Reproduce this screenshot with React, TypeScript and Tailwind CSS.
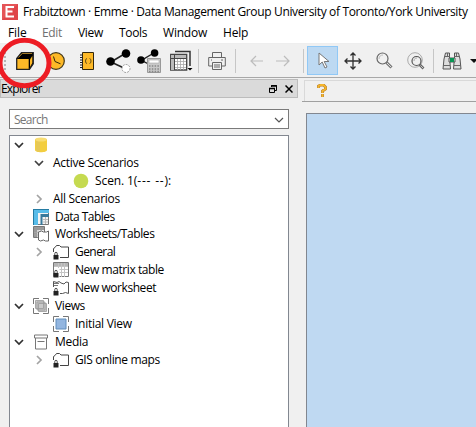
import type { ReactNode } from "react";

function Icon({ w, h, className = "", children }: { w: number; h: number; className?: string; children: ReactNode }) {
  return (
    <svg width={w} height={h} viewBox={`0 0 ${w} ${h}`} className={`shrink-0 ${className}`} fill="none">
      {children}
    </svg>
  );
}

function Separator({ className }: { className: string }) {
  return <div className={`h-6 w-px shrink-0 bg-[#c6c6c6] ${className}`} />;
}

function Chevron({ open, dark = false }: { open?: boolean; dark?: boolean }) {
  return (
    <Icon w={10} h={10}>
      {open ? (
        <path d="M1 3l4 4 4-4" stroke={dark ? "#303030" : "#404040"} strokeWidth="1.7" />
      ) : (
        <path d="M3 1l4 4-4 4" stroke="#a3a3a3" strokeWidth="1.7" />
      )}
    </Icon>
  );
}

function Lock() {
  return (
    <>
      <path d="M1.800 11V9.500a1.200 1.200 0 0 1 2.400 0V11" stroke="#333" strokeWidth=".9" />
      <path d="M.5 11h5v4.500h-5z" fill="#222" />
    </>
  );
}

function LockedFolder() {
  return (
    <Icon w={16} h={16}>
      <path d="M.5 8V4.500l1.500-1 1.500-2h3l1.500 1.500h7.500v10.500H7" stroke="#444" />
      <Lock />
    </Icon>
  );
}

function Corners() {
  return <path d="M.5 6V.5H6M10 .5h5.500V6M15.500 10v5.500H10M6 15.500H.5V10" stroke="#777" />;
}

function Nodes() {
  return (
    <>
      <path d="M5 13L20 4" stroke="#222" strokeWidth="1.500" />
      <circle cx="4.500" cy="12.500" r="4.300" fill="#000" />
      <circle cx="20" cy="4.500" r="4.300" fill="#000" />
    </>
  );
}

function Row({ indent, children }: { indent: string; children: ReactNode }) {
  return <div className={`flex h-[17.92px] items-center whitespace-pre ${indent}`}>{children}</div>;
}

function Label({ gap = "ml-[6px]", className, children }: { gap?: string; className: string; children: ReactNode }) {
  return <span className={`${gap} ${className}`}>{children}</span>;
}

function TitleBar() {
  return (
    <div className="flex h-[22px] items-center pt-[1px]">
      <Icon w={16} h={16} className="ml-[2px]">
        <path d="M0 0h16v16H0z" fill="#df4549" />
        <path d="M0 0h16L0 16z" fill="#f27172" opacity=".35" />
        <path d="M12 3H4.500v9.500H12M4.500 7.500h6" stroke="#fff" strokeWidth="2" />
      </Icon>
      <span className="ml-[5px] whitespace-pre text-[12px] tracking-[-0.35px]">Frabitztown · Emme · Data Management Group University of Toronto/York University</span>
    </div>
  );
}

function MenuBar() {
  return (
    <div className="flex h-[22px] items-center border-b border-[#eee] text-[12px]">
      <span className="ml-2 w-[34px] tracking-[-0.1px]">File</span>
      <span className="w-9 tracking-[-0.35px] text-[#707070]">Edit</span>
      <span className="w-[41px] tracking-[-0.3px]">View</span>
      <span className="w-11 tracking-[-0.35px]">Tools</span>
      <span className="w-[60px] tracking-[-0.2px]">Window</span>
      <span className="tracking-[-0.2px]">Help</span>
    </div>
  );
}

function Toolbar() {
  return (
    <div className="flex h-[34px] items-center overflow-hidden border-b border-[#a8a8a8] bg-[#f0f0f0]">
      <Icon w={2} h={18} className="ml-1"><path d="M1 0v18" stroke="#b5b5b5" strokeWidth="2" strokeDasharray="2 2" /></Icon>
      <Icon w={18} h={18} className="ml-[10px]">
        <path d="M.7 6.500L5.500.7h11.800v11L13.500 17.300H.7z" fill="#000" stroke="#222" strokeWidth="1.200" />
        <path d="M1.300 7h11.400v9.800H1.300z" fill="#fdb927" />
        <path d="M2.500 5.500l3.800-4H16" stroke="#c8952f" strokeWidth=".8" />
        <path d="M14 7.500l2.300-3.500v7L14 15z" fill="#fdb927" />
      </Icon>
      <Icon w={18} h={18} className="ml-[13px]">
        <circle cx="9" cy="9" r="8.300" fill="#fdb927" stroke="#443817" strokeWidth="1.200" />
        <path d="M6.500 4.500l1.500 5 5.500 2.300" stroke="#34280b" strokeWidth="1" />
      </Icon>
      <Icon w={14} h={18} className="ml-[15px]">
        <path d="M2.500.5h11v17h-11z" fill="#fdb927" stroke="#34280b" />
        <path d="M0 3h3M0 5.500h3M0 8h3M0 10.500h3M0 13h3M0 15.500h3" stroke="#222" />
        <path d="M7 6.500q-1.500 0-1.500 2.500t1.500 2.500M9.500 6.500q1.500 0 1.500 2.500t-1.500 2.500" stroke="#675018" />
      </Icon>
      <Icon w={25} h={24} className="ml-3">
        <path d="M5 13l15 7" stroke="#222" strokeWidth="1.500" />
        <Nodes />
        <circle cx="20" cy="19.500" r="4" fill="#fff" stroke="#777" strokeDasharray="2 1" strokeWidth=".7" />
      </Icon>
      <Icon w={25} h={24} className="ml-[6px]">
        <g transform="scale(.88)"><path d="M5 13l12 6" stroke="#222" strokeWidth="1.500" /><Nodes /></g>
        <path d="M10.500 9.500h13v14h-13z" fill="#c9c9c9" stroke="#999" />
        <path d="M12 11h10v3H12z" fill="#fff" stroke="#aaa" strokeWidth=".6" />
        <path d="M12 17h10M12 20h10M12 22.500h10" stroke="#888" strokeWidth="1.400" strokeDasharray="1.500 1.300" />
      </Icon>
      <Icon w={23} h={22} className="ml-[7px] translate-x-px">
        <path d="M5 1.500h15V16" stroke="#333" strokeWidth="1.500" />
        <path d="M.7 4.500h16v15.500H.7z" fill="#fff" stroke="#444" strokeWidth="1.300" />
        <path d="M1 5h15v3H1zM1 8h3v12H1z" fill="#bbb" />
        <path d="M1 8.500h15M4.500 5v15" stroke="#444" />
        <path d="M7.500 9v11M10.500 9v11M13.500 9v11M5 11.500h11M5 14.500h11M5 17.500h11" stroke="#aaa" strokeWidth=".8" />
        <path d="M17.500 18h5l-2.500 2.500z" fill="#000" />
      </Icon>
      <Separator className="ml-[6px]" />
      <Icon w={18} h={18} className="ml-[9px]">
        <path d="M4.500 5V.5h9V5M4.500 14H.7V5.500h16.600V14h-3.800M4.500 10.500h9v7h-9zM6 13h6M6 15h6M3 8h1M13 8h2" stroke="#666" />
      </Icon>
      <Separator className="ml-[9px]" />
      <Icon w={14} h={12} className="ml-[14px]"><path d="M13 6H1M6 1L1 6l5 5" stroke="#bcbcbc" strokeWidth="1.200" /></Icon>
      <Icon w={14} h={12} className="ml-3"><path d="M0 6h13M8 1l5 5-5 5" stroke="#bcbcbc" strokeWidth="1.200" /></Icon>
      <Separator className="ml-[13px]" />
      <div className="ml-[3px] flex h-[29px] w-[31px] shrink-0 items-center justify-center border border-[#90c8f6] bg-[#bdd9f2]">
        <Icon w={12} h={17} className="translate-x-px"><path d="M1 1v12l3.200-3 2.800 6 2-1-2.800-5.500H11z" fill="#fff" stroke="#777" /></Icon>
      </div>
      <Icon w={18} h={18} className="ml-[6px]"><path d="M9 1v16M1 9h16M6.500 3.500L9 1l2.500 2.500M6.500 14.500L9 17l2.500-2.500M3.500 6.500L1 9l2.500 2.500M14.500 6.500L17 9l-2.500 2.500" stroke="#303030" strokeWidth="1.300" /></Icon>
      <Icon w={17} h={17} className="ml-[14px]">
        <circle cx="6.500" cy="6.500" r="5.500" stroke="#666" strokeWidth="1.200" /><path d="M3 7c0-3 2-4 4-4" stroke="#bbb" />
        <path d="M10.500 10.500l5 5" stroke="#777" strokeWidth="3" /><path d="M11 11l4 4" stroke="#ddd" />
      </Icon>
      <Icon w={18} h={18} className="ml-[14px]">
        <circle cx="8" cy="8" r="7.300" stroke="#aaa" /><circle cx="9.500" cy="9" r="4.500" stroke="#555" strokeWidth="1.200" /><path d="M7 9c0-2 1-3 3-3" stroke="#aaa" />
        <path d="M12.500 12.500l4 4" stroke="#666" strokeWidth="2.600" /><path d="M13.500 13.500l2.500 2.500" stroke="#ddd" strokeWidth=".8" />
      </Icon>
      <Separator className="ml-[8px]" />
      <Icon w={20} h={18} className="ml-2">
        <path d="M2.500 5l1-4h4v4l1 12H1L2 7zM17.500 5l-1-4h-4v4l-1 12H19L18 7z" fill="#ddd" stroke="#555" />
        <path d="M1 13.500h7M12 13.500h7M3 4.500h5M12 4.500h5M5.500 1v3M14.500 1v3" stroke="#666" />
        <path d="M7 6h6v4H7z" fill="#e7e7e7" stroke="#555" /><path d="M8 6h4v4H8z" fill="#079653" />
      </Icon>
      <Icon w={6} h={4} className="ml-2"><path d="M0 0h8L4 4z" fill="#111" /></Icon>
    </div>
  );
}

function Explorer() {
  return (
    <aside className="flex w-[298px] shrink-0 flex-col pt-px">
      <header className="flex h-[19px] shrink-0 items-center border border-[#bcbcbc] bg-[#dadada] text-[12px]">
        <span className="grow tracking-[-0.8px]">Explorer</span>
        <Icon w={8} h={8} className="mr-2"><path d="M2.500 2V.5h5v5H6M.5 3.500h5v4h-5z" stroke="#000" /><path d="M2 1h6M0 3.500h6" stroke="#000" strokeWidth="1.500" /></Icon>
        <Icon w={8} h={8} className="mr-[4px]"><path d="M.5.5l7 7m0-7l-7 7" stroke="#000" strokeWidth="1.500" /></Icon>
      </header>
      <div className="ml-[9px] mt-[11px] flex h-5 w-[280px] shrink-0 items-center border border-[#7a7a7a] bg-white px-1 pt-px text-[12px] text-[#777]">
        <span className="grow tracking-[-0.75px]">Search</span>
        <Icon w={10} h={8}><path d="M1 2l4 4 4-4" stroke="#555" strokeWidth="1.200" /></Icon>
      </div>
      <div className="ml-[9px] mt-[6px] w-[280px] grow border border-b-0 border-[#828790] bg-white text-[12px]">
        <Row indent="pl-[4px]">
          <Chevron open dark />
          <Icon w={14} h={16} className="ml-[9px] translate-x-px">
            <path d="M1 2v11c0 3 12 3 12 0V2z" fill="#f3ce3f" /><path d="M2 3h4v12l-4-1z" fill="#e6c856" /><ellipse cx="7" cy="2.500" rx="6" ry="2" fill="#f8dd73" />
          </Icon>
        </Row>
        <Row indent="pl-[24px]"><Chevron open /><Label gap="ml-[9px]" className="tracking-[-0.3px]">Active Scenarios</Label></Row>
        <Row indent="pl-[63px]"><Icon w={16} h={16}><circle cx="8" cy="8" r="7.300" fill="#c5da50" /></Icon><Label className="tracking-[-0.1px]">Scen. 1(<span className="tracking-[0.8px]">--- --</span>):</Label></Row>
        <Row indent="pl-[24px]"><Chevron /><Label gap="ml-[9px]" className="tracking-[-0.3px]">All Scenarios</Label></Row>
        <Row indent="pl-[23px]">
          <Icon w={16} h={16}>
            <path d="M.5.5h15v15H.5z" fill="#f4f4f4" stroke="#777" /><path d="M0 0h16v4H0zM0 4h5v12H0z" fill="#58bce9" /><path d="M0 .5h16M.5 0v16" stroke="#257ba3" />
            <path d="M7.500 5h8.500v3H9.500v8h-2z" fill="#38799b" /><path d="M12.500 8v7M10 10.500h5M10 13h5" stroke="#bbb" />
          </Icon><Label className="tracking-[-0.54px]">Data Tables</Label>
        </Row>
        <Row indent="pl-[4px]">
          <Chevron open dark />
          <Icon w={16} h={16} className="ml-[9px]">
            <path d="M.5.5h11v11H.5z" fill="#eee" stroke="#777" /><path d="M1 1h10v3H1zM1 4h3v7H1z" fill="#999" /><path d="M5 4v8M8 4v8M1 6.500h10M1 9h10" stroke="#aaa" strokeWidth=".7" />
            <path d="M5.500 6l3-1 2 1h3l2-1v10h-3l-2-1-3 1-2-1z" fill="#fff" stroke="#666" />
          </Icon><Label className="tracking-[-0.42px]">Worksheets/Tables</Label>
        </Row>
        <Row indent="pl-[24px]"><Chevron /><span className="ml-[9px]"><LockedFolder /></span><Label className="tracking-[-0.55px]">General</Label></Row>
        <Row indent="pl-[43px]">
          <Icon w={16} h={16}><path d="M.5.5h15v14H.5z" fill="#fff" stroke="#777" /><path d="M1 1h14v3H1z" fill="#b5b5b5" /><path d="M5.500 1v14M8.500 1v14M11.500 1v14M1 4.500h14M6 7.500h9M6 10.500h9" stroke="#c4c4c4" /><path d="M1 6h5.500v9H1z" fill="#fff" /><Lock /></Icon>
          <Label className="tracking-[-0.42px]">New matrix table</Label>
        </Row>
        <Row indent="pl-[43px]">
          <Icon w={16} h={16}><path d="M.5 7V1.500l3.500 1 2-1 2 1.500 3 1 2-2 2.500.5v11l-3-1-3 1H7" stroke="#555" /><path d="M1 3.500h5M1 5.500h4" stroke="#555" strokeWidth=".8" /><Lock /></Icon>
          <Label className="tracking-[-0.44px]">New worksheet</Label>
        </Row>
        <Row indent="pl-[4px]">
          <Chevron open dark /><Icon w={16} h={16} className="ml-[9px]"><Corners /><path d="M2.500 2.500h8v8h-8zM4 4h8v8H4zM5.500 5.500h8v8h-8z" fill="#c9c9c9" stroke="#999" strokeWidth=".8" /></Icon>
          <Label className="tracking-[-0.4px]">Views</Label>
        </Row>
        <Row indent="pl-[43px]"><Icon w={16} h={16}><Corners /><path d="M3 3h10v10H3z" fill="#93b6e0" stroke="#608ebc" /></Icon><Label className="tracking-[-0.27px]">Initial View</Label></Row>
        <Row indent="pl-[4px]">
          <Chevron open dark /><Icon w={16} h={16} className="ml-[9px]"><path d="M1.500 1h13v3h-13zM2.500 4v11h11V4M4.500 7.500h7" stroke="#777" /></Icon>
          <Label className="tracking-[-0.3px]">Media</Label>
        </Row>
        <Row indent="pl-[24px]"><Chevron /><span className="ml-[9px]"><LockedFolder /></span><Label className="tracking-[-0.38px]">GIS online maps</Label></Row>
      </div>
    </aside>
  );
}

export default function App() {
  return (
    <div className="relative flex h-[427px] w-[476px] flex-col overflow-hidden bg-white font-['Open_Sans','Noto_Sans',sans-serif] leading-4 text-black">
      <TitleBar />
      <MenuBar />
      <Toolbar />
      <div className="flex min-h-0 grow bg-[#f0f0f0]">
        <Explorer />
        <main className="flex min-w-0 grow flex-col pl-1 pt-[2px]">
          <div className="flex h-[22px] shrink-0 border-b border-[#a0a0a0] pl-[2px]">
            <div className="flex grow items-center border-l border-t border-[#d9d9d9] pb-[2px] pl-3">
              <Icon w={10} h={13}><path d="M1.500 4V2l2-1h3l2 2v2l-3 2v2M5.500 10v3" stroke="#b37b25" strokeWidth="2.800" /><path d="M1.500 4V2l2-1h3l2 2v2l-3 2v2M5.500 10v3" stroke="#f4b52d" strokeWidth="1.800" /></Icon>
            </div>
          </div>
          <div className="ml-1 mt-[11px] grow border-l border-t border-[#828790] bg-[#bfd9f2]" />
        </main>
      </div>
      <svg className="pointer-events-none absolute left-0 top-9" width="54" height="56" fill="none">
        <ellipse cx="24.500" cy="27" rx="24.500" ry="22.700" stroke="#ed1c24" strokeWidth="5" />
      </svg>
    </div>
  );
}
